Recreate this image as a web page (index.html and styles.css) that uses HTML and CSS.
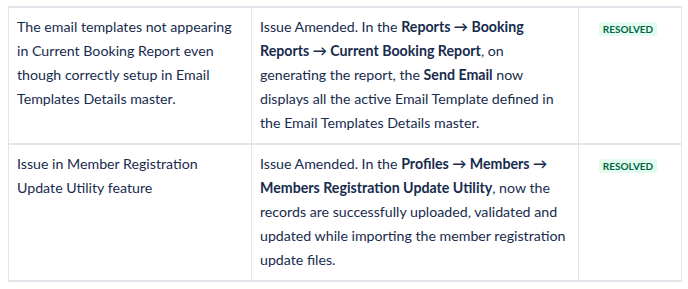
FILE: index.html
```html
<!DOCTYPE html>
<html>
    <head>
        <title>Release notes</title>
        <link rel="stylesheet" href="styles.css">
    </head>
    <body>
        <table class="notes">
            <tr>
                <td class="issue">The email templates not appearing in Current Booking Report even though correctly setup in Email Templates Details master.</td>
                <td class="fix">Issue Amended. In the <strong>Reports &rarr; Booking</strong> <strong>Reports &rarr; Current Booking Report</strong>, on generating the report, the <strong>Send Email</strong> now displays all the active Email Template defined in the Email Templates Details master.</td>
                <td class="status"><span class="lozenge">Resolved</span></td>
            </tr>
            <tr>
                <td class="issue">Issue in Member Registration Update Utility feature</td>
                <td class="fix">Issue Amended. In the <strong>Profiles &rarr; Members &rarr;</strong> <strong>Members Registration Update Utility</strong>, now the records are successfully uploaded, validated and updated while importing the member registration update files.</td>
                <td class="status"><span class="lozenge">Resolved</span></td>
            </tr>
        </table>
    </body>
</html>
```

FILE: styles.css
```css
body{
    margin: 0;
    padding: 6px 0 0 8px;
    background-color: white;
    font-family: Lato, "DejaVu Sans", sans-serif;
    font-size: 14.2px;
    color: #172b4d;
}

.notes{
    border-collapse: collapse;
    table-layout: fixed;
    width: 674px;
}

.notes td{
    border: 1px solid #e4e5ea;
    border-top-width: 2px;
    border-bottom-width: 2px;
    padding: 7px 8px 8px 8px;
    line-height: 24px;
    vertical-align: top;
}

.notes .issue{
    width: 226px;
}

.notes .fix{
    width: 310px;
}

.notes .status{
    text-align: center;
    padding-left: 2px;
    padding-right: 6px;
}

.notes strong{
    font-weight: 700;
    color: #172b4d;
}

.lozenge{
    display: inline-block;
    background-color: #e3fcef;
    color: #006644;
    font-size: 10px;
    font-weight: 700;
    text-transform: uppercase;
    line-height: 14px;
    padding: 0 4px;
    border-radius: 3px;
    margin-top: 7px;
    vertical-align: top;
}
```
